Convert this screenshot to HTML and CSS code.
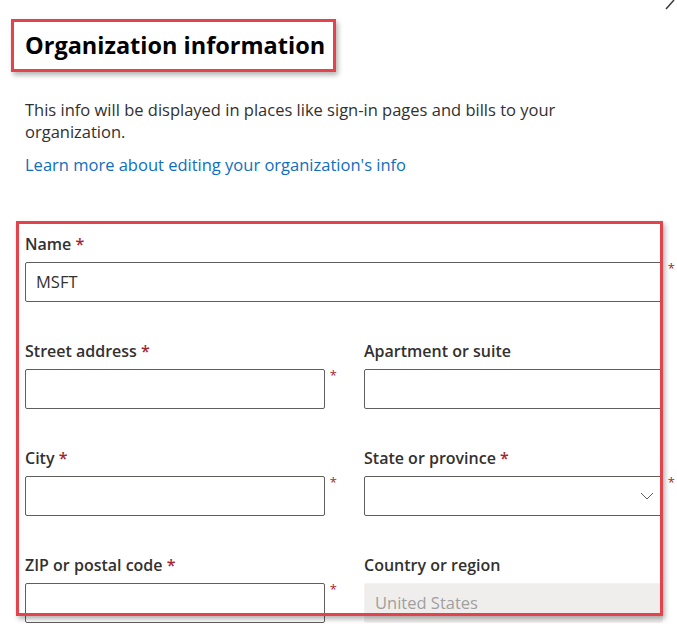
FILE: index.html
```html
<!DOCTYPE html>
<html lang="en">
<head>
  <meta charset="UTF-8" />
  <meta name="viewport" content="width=device-width, initial-scale=1.0"/>
  <title>Organization information</title>
  <link rel="stylesheet" href="styles.css">
</head>
<body>

<div class="page">
  <!-- close icon, cut off by the screenshot edge -->
  <svg class="close-icon" width="14" height="10" viewBox="0 0 14 10">
    <line x1="3" y1="9" x2="11" y2="0" stroke="#3b3a39" stroke-width="1.5"/>
  </svg>

  <h1 class="title">Organization information</h1>

  <p class="desc">This info will be displayed in places like sign-in pages and bills to your organization.</p>
  <a class="learn-link" href="#">Learn more about editing your organization's info</a>

  <div class="form">
    <div class="field wide">
      <label>Name <span class="req">*</span></label>
      <div class="control">
        <div class="input">MSFT</div>
        <span class="req-mark">*</span>
      </div>
    </div>

    <div class="field">
      <label>Street address <span class="req">*</span></label>
      <div class="control">
        <div class="input"></div>
        <span class="req-mark">*</span>
      </div>
    </div>
    <div class="field">
      <label>Apartment or suite</label>
      <div class="control">
        <div class="input"></div>
      </div>
    </div>

    <div class="field">
      <label>City <span class="req">*</span></label>
      <div class="control">
        <div class="input"></div>
        <span class="req-mark">*</span>
      </div>
    </div>
    <div class="field">
      <label>State or province <span class="req">*</span></label>
      <div class="control">
        <div class="input select">
          <svg width="14" height="8" viewBox="0 0 14 8">
            <polyline points="1,1 7,7 13,1" fill="none" stroke="#605e5c" stroke-width="1"/>
          </svg>
        </div>
        <span class="req-mark">*</span>
      </div>
    </div>

    <div class="field">
      <label>ZIP or postal code <span class="req">*</span></label>
      <div class="control">
        <div class="input"></div>
        <span class="req-mark">*</span>
      </div>
    </div>
    <div class="field">
      <label>Country or region</label>
      <div class="control">
        <div class="input disabled">United States</div>
      </div>
    </div>
  </div>

  <!-- red highlight boxes drawn over the page -->
  <div class="highlight title-box"></div>
  <div class="highlight form-box"></div>
</div>

</body>
</html>
```

FILE: styles.css
```css
body {
  margin: 0;
  font-family: "Open Sans", "Noto Sans", sans-serif;
  color: #323130;
  background: #fff;
  overflow: hidden;
}
.page {
  position: relative;
  width: 638px;
  padding: 29px 0 0 25px;
  height: 603px;
}
.close-icon {
  position: absolute;
  left: 663px;
  top: 0;
}
.title {
  margin: 0;
  font-size: 23.5px;
  line-height: 32px;
  font-weight: 700;
  color: #000;
}
.desc {
  margin: 38px 0 0 0;
  width: 580px;
  font-size: 16.5px;
  line-height: 22px;
}
.learn-link {
  display: block;
  margin-top: 11px;
  font-size: 16.5px;
  line-height: 22px;
  color: #106ebe;
  text-decoration: none;
}
.form {
  margin-top: 58px;
  display: grid;
  grid-template-columns: 300px 299px;
  column-gap: 39px;
  row-gap: 39px;
}
.field.wide {
  grid-column: 1 / 3;
}
.field label {
  display: block;
  font-size: 16px;
  line-height: 20px;
  font-weight: 600;
  margin-bottom: 8px;
}
.req {
  color: #a4262c;
}
.control {
  position: relative;
}
.input {
  box-sizing: border-box;
  height: 40px;
  border: 1px solid #605e5c;
  border-radius: 2px;
  padding: 0 10px;
  font-size: 16.5px;
  line-height: 38px;
}
.input.select {
  display: flex;
  align-items: center;
  justify-content: flex-end;
  padding-right: 8px;
}
.input.disabled {
  border-color: #f3f2f1;
  background: #efeeed;
  color: #a19f9d;
}
.req-mark {
  position: absolute;
  top: -2px;
  right: -12px;
  font-size: 13px;
  line-height: 16px;
  color: #a4262c;
}
.highlight {
  position: absolute;
  border: 3px solid #e5434b;
  box-shadow: 2px 3px 5px rgba(0, 0, 0, 0.3);
}
.title-box {
  left: 11px;
  top: 19px;
  width: 319px;
  height: 47px;
}
.form-box {
  left: 16px;
  top: 221px;
  width: 641px;
  height: 389px;
}
```
